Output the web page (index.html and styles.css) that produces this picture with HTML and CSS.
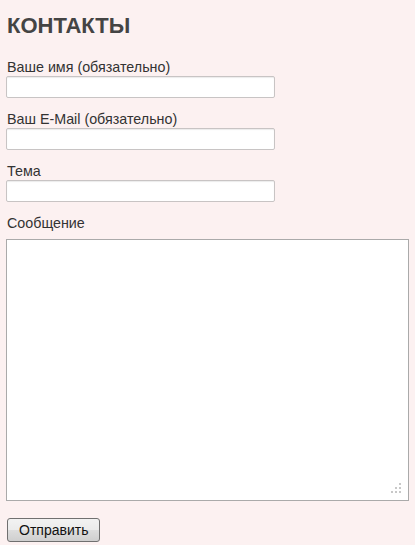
FILE: index.html
```html
<!DOCTYPE html>
<html lang="ru">
<head>
    <meta charset="UTF-8">
    <meta name="viewport" content="width=device-width, initial-scale=1.0">
    <title>Контакты</title>
    <link rel="stylesheet" href="styles.css">
</head>
<body>
    <div class="page">
        <h1 class="title">КОНТАКТЫ</h1>
        <form class="contact-form" onsubmit="return false;">
            <label class="field">
                <span class="label">Ваше имя (обязательно)</span>
                <input type="text" class="text-input" name="your-name">
            </label>
            <label class="field">
                <span class="label">Ваш E-Mail (обязательно)</span>
                <input type="email" class="text-input" name="your-email">
            </label>
            <label class="field">
                <span class="label">Тема</span>
                <input type="text" class="text-input" name="your-subject">
            </label>
            <label class="field field-message">
                <span class="label">Сообщение</span>
                <span class="message-wrap">
                    <textarea class="message" name="your-message"></textarea>
                    <svg class="grip" width="10" height="10" viewBox="0 0 10 10">
                        <rect x="8" y="0" width="2" height="2" fill="#c8c8c8"/>
                        <rect x="4" y="4" width="2" height="2" fill="#c8c8c8"/>
                        <rect x="8" y="4" width="2" height="2" fill="#c8c8c8"/>
                        <rect x="0" y="8" width="2" height="2" fill="#c8c8c8"/>
                        <rect x="4" y="8" width="2" height="2" fill="#c8c8c8"/>
                        <rect x="8" y="8" width="2" height="2" fill="#c8c8c8"/>
                    </svg>
                </span>
            </label>
            <button type="submit" class="send">Отправить</button>
        </form>
    </div>
</body>
</html>
```

FILE: styles.css
```css
body {
    margin: 0;
    background-color: #fcf1f1;
    font-family: "Liberation Sans", Arial, sans-serif;
    color: #333;
}
.page {
    padding: 12px 6px 0 6px;
}
.title {
    margin: 0 0 18px 1px;
    font-size: 22px;
    font-weight: bold;
    color: #444;
    line-height: 28px;
}
.contact-form {
    display: flex;
    flex-direction: column;
    align-items: flex-start;
}
.field {
    display: flex;
    flex-direction: column;
    margin-bottom: 12px;
}
.label {
    font-size: 14.3px;
    line-height: 18px;
    padding-left: 1px;
}
.text-input {
    width: 269px;
    height: 22px;
    box-sizing: border-box;
    margin: 0;
    border: 1px solid #c8c4c4;
    border-radius: 2px;
    background: #fff;
    box-shadow: inset 0 1px 1px rgba(0, 0, 0, 0.08);
}
.field-message {
    width: 100%;
    margin-bottom: 17px;
}
.message-wrap {
    position: relative;
    display: block;
    margin-top: 7px;
}
.message {
    display: block;
    width: 100%;
    height: 262px;
    box-sizing: border-box;
    margin: 0;
    border: 1px solid #aaa;
    background: #fff;
    resize: none;
}
.grip {
    position: absolute;
    right: 8px;
    bottom: 8px;
}
.send {
    margin-left: 1px;
    padding: 0 11px;
    height: 24px;
    font-family: "Liberation Sans", Arial, sans-serif;
    font-size: 14px;
    color: #111;
    border: 1px solid #707070;
    border-radius: 3px;
    background: linear-gradient(#f2f2f2, #ebebeb 50%, #dddddd 51%, #cfcfcf);
}
```
